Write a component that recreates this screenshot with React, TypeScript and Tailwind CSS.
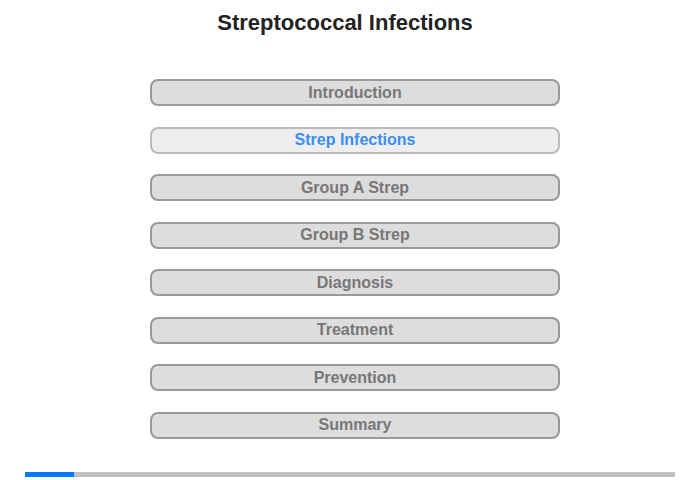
const items = [
  "Introduction",
  "Strep Infections",
  "Group A Strep",
  "Group B Strep",
  "Diagnosis",
  "Treatment",
  "Prevention",
  "Summary",
];

export default function App() {
  const active = 1;
  return (
    <div className="w-[700px] h-[480px] bg-white flex flex-col items-center font-['Liberation_Sans',Arial,sans-serif]">
      <h1 className="mt-[10px] mr-[10px] text-[22px] leading-[26px] font-bold text-[#222]">Streptococcal Infections</h1>
      <div className="mt-[43px] ml-[10px] flex flex-col gap-[20.5px] w-[410px]">
        {items.map((label, i) => (
          <div
            key={label}
            className={
              i === active
                ? "h-[27px] rounded-[8px] border-2 border-[#bbb] bg-[#eee] flex items-center justify-center text-[16px] font-bold text-[#3a8ef6]"
                : "h-[27px] rounded-[8px] border-2 border-[#999] bg-[#ddd] flex items-center justify-center text-[16px] font-bold text-[#777]"
            }
          >
            {label}
          </div>
        ))}
      </div>
      <div className="mt-auto mb-[3px] w-[650px] h-[5px] bg-[#c0c0c0] flex">
        <div className="w-[49px] h-full bg-[#0077ff]" />
      </div>
    </div>
  );
}
